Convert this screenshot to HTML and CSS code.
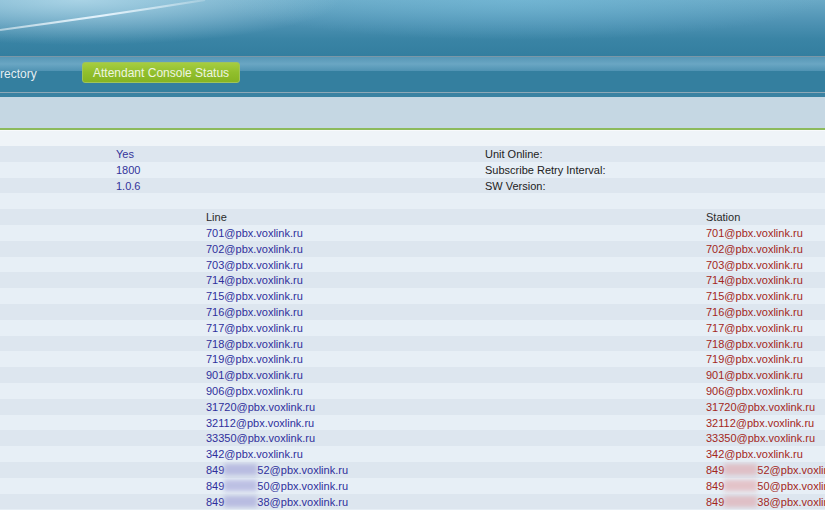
FILE: index.html
```html
<!DOCTYPE html>
<html>
<head>
<meta charset="utf-8">
<link rel="stylesheet" href="styles.css">
</head>
<body>
<div class="header">
  <svg class="swoosh" width="825" height="56" viewBox="0 0 825 56">
    <defs>
      <linearGradient id="sw" x1="0" y1="0" x2="1" y2="0">
        <stop offset="0" stop-color="#ffffff" stop-opacity="0.5"/>
        <stop offset="0.5" stop-color="#e8f6ff" stop-opacity="0.95"/>
        <stop offset="1" stop-color="#ffffff" stop-opacity="0.2"/>
      </linearGradient>
    </defs>
    <path d="M0 30 C 60 22, 130 12, 205 0" stroke="url(#sw)" stroke-width="2.2" fill="none"/>
  </svg>
</div>
<div class="nav">
  <div class="nav-strip"></div>
  <div class="nav-main">
    <span class="tab">rectory</span>
    <span class="tab-active">Attendant Console Status</span>
  </div>
  <div class="nav-bottom"></div>
</div>
<div class="subbar"></div>
<div class="green-line"></div>
<div class="rows">
  <div class="row top"></div>
  <div class="row dark"><span class="c-val">Yes</span><span class="c-label">Unit Online:</span></div>
  <div class="row light"><span class="c-val">1800</span><span class="c-label">Subscribe Retry Interval:</span></div>
  <div class="row dark"><span class="c-val">1.0.6</span><span class="c-label">SW Version:</span></div>
  <div class="row light"></div>
  <div class="row dark"><span class="c-line head">Line</span><span class="c-station head">Station</span></div>
  <div class="row light"><span class="c-line">701@pbx.voxlink.ru</span><span class="c-station">701@pbx.voxlink.ru</span></div>
  <div class="row dark"><span class="c-line">702@pbx.voxlink.ru</span><span class="c-station">702@pbx.voxlink.ru</span></div>
  <div class="row light"><span class="c-line">703@pbx.voxlink.ru</span><span class="c-station">703@pbx.voxlink.ru</span></div>
  <div class="row dark"><span class="c-line">714@pbx.voxlink.ru</span><span class="c-station">714@pbx.voxlink.ru</span></div>
  <div class="row light"><span class="c-line">715@pbx.voxlink.ru</span><span class="c-station">715@pbx.voxlink.ru</span></div>
  <div class="row dark"><span class="c-line">716@pbx.voxlink.ru</span><span class="c-station">716@pbx.voxlink.ru</span></div>
  <div class="row light"><span class="c-line">717@pbx.voxlink.ru</span><span class="c-station">717@pbx.voxlink.ru</span></div>
  <div class="row dark"><span class="c-line">718@pbx.voxlink.ru</span><span class="c-station">718@pbx.voxlink.ru</span></div>
  <div class="row light"><span class="c-line">719@pbx.voxlink.ru</span><span class="c-station">719@pbx.voxlink.ru</span></div>
  <div class="row dark"><span class="c-line">901@pbx.voxlink.ru</span><span class="c-station">901@pbx.voxlink.ru</span></div>
  <div class="row light"><span class="c-line">906@pbx.voxlink.ru</span><span class="c-station">906@pbx.voxlink.ru</span></div>
  <div class="row dark"><span class="c-line">31720@pbx.voxlink.ru</span><span class="c-station">31720@pbx.voxlink.ru</span></div>
  <div class="row light"><span class="c-line">32112@pbx.voxlink.ru</span><span class="c-station">32112@pbx.voxlink.ru</span></div>
  <div class="row dark"><span class="c-line">33350@pbx.voxlink.ru</span><span class="c-station">33350@pbx.voxlink.ru</span></div>
  <div class="row light"><span class="c-line">342@pbx.voxlink.ru</span><span class="c-station">342@pbx.voxlink.ru</span></div>
  <div class="row dark"><span class="c-line">849<span class="blur blue"></span>52@pbx.voxlink.ru</span><span class="c-station">849<span class="blur red"></span>52@pbx.voxlink.ru</span></div>
  <div class="row light"><span class="c-line">849<span class="blur blue"></span>50@pbx.voxlink.ru</span><span class="c-station">849<span class="blur red"></span>50@pbx.voxlink.ru</span></div>
  <div class="row dark"><span class="c-line">849<span class="blur blue"></span>38@pbx.voxlink.ru</span><span class="c-station">849<span class="blur red"></span>38@pbx.voxlink.ru</span></div>
</div>
</body>
</html>
```

FILE: styles.css
```css
html, body {
  margin: 0;
  padding: 0;
  width: 825px;
  height: 510px;
  overflow: hidden;
  background: #e6eef5;
  font-family: "Liberation Sans", Arial, sans-serif;
  font-size: 11px;
}

.header {
  height: 56px;
  position: relative;
  overflow: hidden;
  background:
    radial-gradient(ellipse 260px 45px at 80px 0px, rgba(190, 225, 240, 0.75), rgba(190, 225, 240, 0) 100%),
    radial-gradient(ellipse 300px 40px at 520px 0px, rgba(120, 190, 220, 0.55), rgba(120, 190, 220, 0) 100%),
    linear-gradient(to bottom, #6aa9c6 0%, #4e92b3 40%, #3a84a5 70%, #337e9f 100%);
}

.swoosh {
  position: absolute;
  left: 0;
  top: 0;
}

.nav {
  border-top: 1px solid #7a97a7;
}

.nav-strip {
  height: 14px;
  background: linear-gradient(to bottom, #5797b6, #6aa6c3 50%, #5093b3);
}

.nav-main {
  height: 21px;
  background: #347f9f;
  display: flex;
  align-items: flex-start;
}

.tab {
  color: #e4eef3;
  font-size: 12px;
  line-height: 16px;
  margin-top: -5px;
  width: 82px;
}

.tab-active {
  margin-top: -9px;
  height: 21px;
  line-height: 20px;
  width: 158px;
  box-sizing: border-box;
  padding-left: 10px;
  font-size: 12px;
  color: #eef5e0;
  border-radius: 3px;
  border: 1px solid #9fc45a;
  background: linear-gradient(to bottom, #a6cd40 0%, #91bf2c 50%, #86b422 100%);
}

.nav-bottom {
  height: 4px;
  border-top: 1px solid #8ea8b7;
  background: #3a82a2;
}

.subbar {
  height: 31px;
  background: #c5d7e3;
}

.green-line {
  height: 2px;
  background: #8cba5c;
}

.row {
  height: 15.8px;
  line-height: 15.8px;
  position: relative;
  white-space: nowrap;
}

.row.top {
  height: 16px;
  background: #eff4f8;
  border-top: 1px solid #f8fafc;
  box-sizing: border-box;
}

.row.dark {
  background: #dde6ef;
}

.row.light {
  background: #e7eff6;
}

.row span {
  position: absolute;
  top: 1px;
}

.c-val {
  left: 116px;
  color: #33339a;
}

.c-label {
  left: 485px;
  color: #222;
}

.c-line {
  left: 206px;
  color: #2f2f9c;
}

.c-station {
  left: 706px;
  color: #a3271c;
}

.head {
  color: #2a2a2a;
}

.row span.blur {
  position: static;
  display: inline-block;
  width: 33px;
  height: 11px;
  vertical-align: -1px;
  filter: blur(2px);
}

.blur.blue {
  background: rgba(160, 160, 215, 0.6);
}

.blur.red {
  background: rgba(225, 165, 170, 0.6);
}
```
